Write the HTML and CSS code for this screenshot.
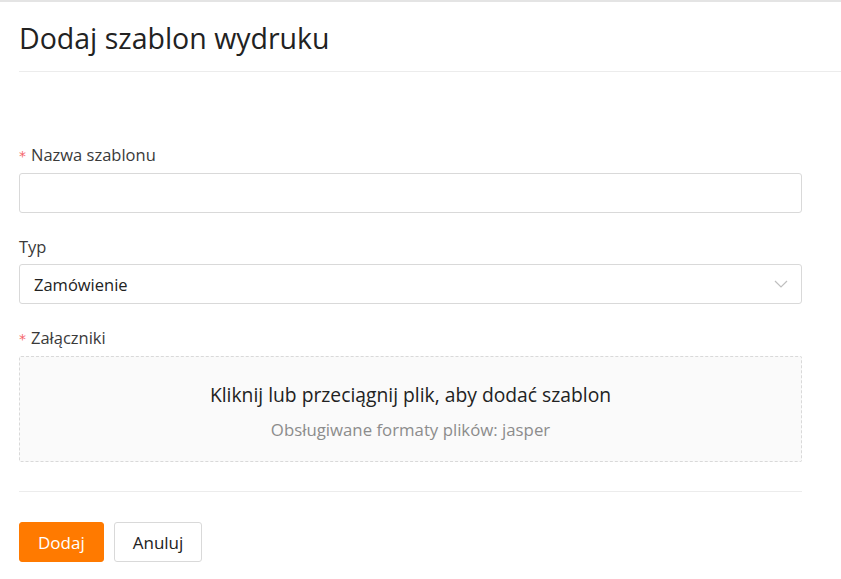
FILE: index.html
```html
<!DOCTYPE html>
<html>

<head>
  <meta charset="UTF-8">
  <title>Dodaj szablon wydruku</title>
  <link rel="stylesheet" href="styles.css">
</head>

<body>
  <div class="page">
    <div class="header">
      <h1 class="title">Dodaj szablon wydruku</h1>
    </div>

    <form class="form">
      <div class="field">
        <label class="label required">Nazwa szablonu</label>
        <input class="input" type="text">
      </div>

      <div class="field">
        <label class="label">Typ</label>
        <div class="select">
          <span>Zamówienie</span>
          <svg class="arrow" width="14" height="14" viewBox="0 0 14 14">
            <path d="M1 4 L7 10 L13 4" fill="none" stroke="#bfbfbf" stroke-width="1.2" />
          </svg>
        </div>
      </div>

      <div class="field">
        <label class="label required">Załączniki</label>
        <div class="dropzone">
          <div class="drop-title">Kliknij lub przeciągnij plik, aby dodać szablon</div>
          <div class="drop-hint">Obsługiwane formaty plików: jasper</div>
        </div>
      </div>

      <div class="actions">
        <button type="button" class="btn btn-primary">Dodaj</button>
        <button type="button" class="btn">Anuluj</button>
      </div>
    </form>
  </div>
</body>

</html>
```

FILE: styles.css
```css
* {
  margin: 0px;
  padding: 0px;
  box-sizing: border-box;
}

body {
  font-family: "Open Sans", "Noto Sans", sans-serif;
  color: #262626;
  background-color: #fff;
  border-top: 2px solid #e4e4e4;
}

.page {
  padding-left: 19px;
}

.header {
  height: 70px;
  border-bottom: 1px solid #ececec;
  display: flex;
  align-items: center;
}

.title {
  font-size: 28.5px;
  font-weight: normal;
  color: #222;
  padding-top: 2px;
}

.form {
  width: 783px;
  padding-top: 72px;
}

.field {
  margin-bottom: 23px;
}

.label {
  display: block;
  font-size: 16.5px;
  color: #3a3a3a;
  line-height: 22px;
  padding-bottom: 6px;
}

.label.required::before {
  content: "*";
  color: #f5646a;
  margin-right: 5px;
  font-family: "DejaVu Sans", sans-serif;
  font-size: 14px;
}

.input,
.select {
  width: 100%;
  height: 40px;
  border: 1px solid #d9d9d9;
  border-radius: 3px;
  background-color: #fff;
  font-family: inherit;
  font-size: 16.5px;
  outline: none;
}

.select {
  display: flex;
  align-items: center;
  justify-content: space-between;
  padding: 0 13px 0 14px;
  color: #222;
}

.arrow {
  display: block;
}

.field-upload .label {
  padding-bottom: 5px;
}

.dropzone {
  height: 106px;
  border: 1px dashed #d9d9d9;
  border-radius: 2px;
  background-color: #fafafa;
  display: flex;
  flex-direction: column;
  align-items: center;
  justify-content: center;
  padding-top: 6px;
}

.drop-title {
  font-size: 19.3px;
  line-height: 26px;
  color: #222;
}

.drop-hint {
  font-size: 16.8px;
  line-height: 24px;
  color: #8c8c8c;
  margin-top: 10px;
}

.actions {
  border-top: 1px solid #ececec;
  margin-top: 29px;
  padding-top: 30px;
  display: flex;
  gap: 10px;
}

.btn {
  height: 40px;
  padding: 0 18px;
  font-family: inherit;
  font-size: 17px;
  color: #222;
  background-color: #fff;
  border: 1px solid #d9d9d9;
  border-radius: 3px;
  cursor: pointer;
}

.btn-primary {
  background-color: #ff7a00;
  border-color: #ff7a00;
  color: #fff;
}
```
